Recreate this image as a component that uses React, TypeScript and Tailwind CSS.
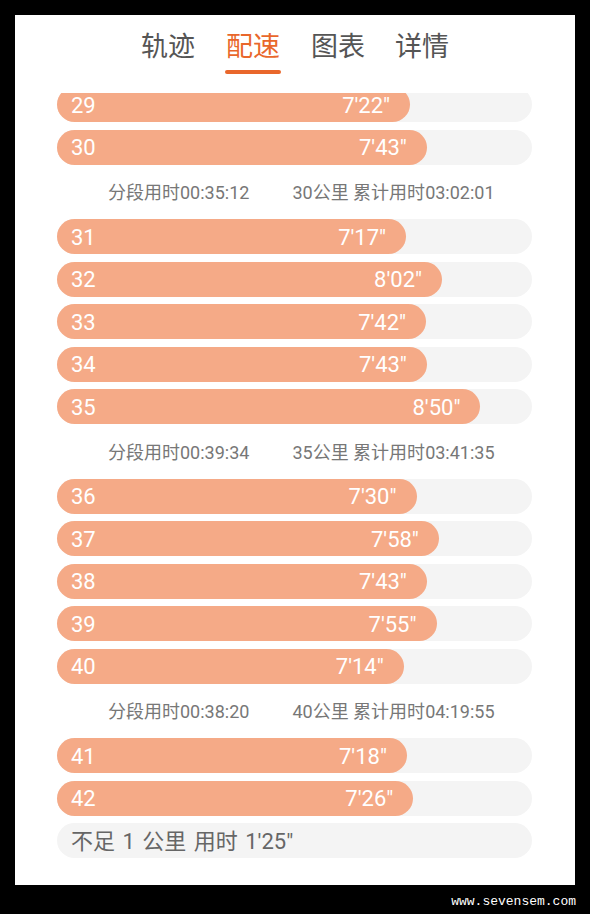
import React from 'react'

type Split = { km: number; pace: string }

const font = { fontFamily: 'Roboto, "Noto Sans CJK SC", sans-serif' }

const groups: { splits: Split[]; summary?: { segment: string; km: number; total: string } }[] = [
  {
    splits: [
      { km: 29, pace: "7'22\"" },
      { km: 30, pace: "7'43\"" },
    ],
    summary: { segment: '00:35:12', km: 30, total: '03:02:01' },
  },
  {
    splits: [
      { km: 31, pace: "7'17\"" },
      { km: 32, pace: "8'02\"" },
      { km: 33, pace: "7'42\"" },
      { km: 34, pace: "7'43\"" },
      { km: 35, pace: "8'50\"" },
    ],
    summary: { segment: '00:39:34', km: 35, total: '03:41:35' },
  },
  {
    splits: [
      { km: 36, pace: "7'30\"" },
      { km: 37, pace: "7'58\"" },
      { km: 38, pace: "7'43\"" },
      { km: 39, pace: "7'55\"" },
      { km: 40, pace: "7'14\"" },
    ],
    summary: { segment: '00:38:20', km: 40, total: '04:19:55' },
  },
  {
    splits: [
      { km: 41, pace: "7'18\"" },
      { km: 42, pace: "7'26\"" },
    ],
  },
]

const tabs = ['轨迹', '配速', '图表', '详情']

// bar width follows the pace in seconds
const paceWidth = (pace: string) => {
  const m = pace.match(/(\d+)'(\d+)/)
  if (!m) return 0
  const secs = parseInt(m[1]) * 60 + parseInt(m[2])
  return secs * 0.799
}

function SplitBar({ split }: { split: Split }) {
  return (
    <div className="h-[35px] w-full rounded-full bg-[#f4f4f4] shrink-0">
      <div
        className="h-full rounded-full bg-[#f5aa87] flex items-center justify-between pl-[14px] pr-[20px] pt-[2px] text-white text-[22px] leading-none"
        style={{ width: paceWidth(split.pace) }}
      >
        <span>{split.km}</span>
        <span>{split.pace}</span>
      </div>
    </div>
  )
}

export default function App() {
  return (
    <div className="w-[590px] h-[914px] bg-black flex flex-col" style={font}>
      <div className="mx-[15px] mt-[15px] h-[870px] bg-white flex flex-col overflow-hidden">
        <div className="h-[78px] shrink-0 flex justify-center gap-[30px] pt-[16px]">
          {tabs.map((t) => (
            <div key={t} className="flex flex-col items-center">
              <span
                className={
                  'text-[27px] leading-[32px] ' + (t === '配速' ? 'text-[#e9672b]' : 'text-[#555555]')
                }
              >
                {t}
              </span>
              {t === '配速' && <div className="mt-[7px] h-[4px] w-[56px] rounded-full bg-[#e9672b]" />}
            </div>
          ))}
        </div>

        <div className="flex-1 overflow-hidden px-[42px] pr-[43px]">
          <div className="-mt-[6px] flex flex-col gap-[7.5px]">
            {groups.map((g, i) => (
              <React.Fragment key={i}>
                {g.splits.map((s) => (
                  <SplitBar key={s.km} split={s} />
                ))}
                {g.summary && (
                  <div className="h-[39.5px] shrink-0 flex items-center pl-[51px] gap-[43px] pt-[2px] text-[18px] text-[#777777]">
                    <span>分段用时{g.summary.segment}</span>
                    <span>
                      {g.summary.km}公里 累计用时{g.summary.total}
                    </span>
                  </div>
                )}
              </React.Fragment>
            ))}
            <div className="h-[35px] w-full shrink-0 rounded-full bg-[#f4f4f4] flex items-center pl-[14px] pt-[2px] text-[22px] leading-none tracking-normal text-[#666666] [word-spacing:2px]">
              不足 1 公里 用时 1'25"
            </div>
          </div>
        </div>
      </div>
      <div className="flex-1 flex items-center justify-end pr-[14px] pt-[4px]">
        <span className="text-white text-[13px] leading-none" style={{ fontFamily: '"Liberation Mono", monospace' }}>
          www.sevensem.com
        </span>
      </div>
    </div>
  )
}
